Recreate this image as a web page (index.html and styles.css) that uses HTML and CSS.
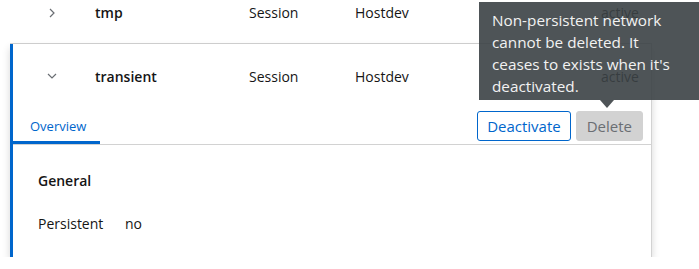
FILE: index.html
```html
<!DOCTYPE html>
<html>
<head>
  <meta name="viewport" content="width=device-width,initial-scale=1.0">
  <title>Networks</title>
  <link rel="stylesheet" href="styles.css">
</head>
<body>
  <div class="networks">
    <div class="row">
      <span class="toggle">
        <svg width="10" height="10" viewBox="0 0 10 10"><polyline points="3,1 7,5 3,9" /></svg>
      </span>
      <span class="name">tmp</span>
      <span>Session</span>
      <span>Hostdev</span>
      <span>active</span>
    </div>

    <div class="expanded">
      <div class="row">
        <span class="toggle">
          <svg width="10" height="10" viewBox="0 0 10 10"><polyline points="1,3 5,7 9,3" /></svg>
        </span>
        <span class="name">transient</span>
        <span>Session</span>
        <span>Hostdev</span>
        <span>active</span>
      </div>

      <div class="detail">
        <div class="tabbar">
          <a class="tab current">Overview</a>
          <div class="actions">
            <button type="button" class="btn secondary">Deactivate</button>
            <button type="button" class="btn disabled">Delete</button>
          </div>
        </div>
        <div class="panel">
          <h3>General</h3>
          <dl>
            <dt>Persistent</dt>
            <dd>no</dd>
          </dl>
        </div>
      </div>
    </div>
  </div>

  <div class="tooltip">
    Non-persistent network cannot be deleted. It ceases to exists when it's deactivated.
  </div>
</body>
</html>
```

FILE: styles.css
```css
body {
  margin: 0;
  font-family: "Open Sans", sans-serif;
  font-size: 14px;
  color: #151515;
  background: #fff;
}

.networks {
  margin: -18px 0 0 10px;
  width: 642px;
}

.row {
  display: grid;
  grid-template-columns: 85px 154px 106px 246px 1fr;
  align-items: center;
  height: 61px;
  border-bottom: 1px solid #d2d2d2;
}

.expanded {
  box-shadow: inset 3px 0 0 #06c, 0 4px 8px rgba(3, 3, 3, 0.16);
  border-right: 1px solid #d2d2d2;
}

.expanded .row {
  height: 64px;
  border-bottom: none;
}

.toggle {
  display: flex;
  padding-left: 37px;
}

.toggle svg polyline {
  fill: none;
  stroke: #6a6e73;
  stroke-width: 1.2;
}

.name {
  font-weight: 600;
}

.tabbar {
  display: flex;
  justify-content: space-between;
  align-items: center;
  height: 36px;
  margin-left: 3px;
  padding-right: 8px;
  border-bottom: 1px solid #d2d2d2;
}

.tab {
  display: flex;
  align-items: center;
  height: 36px;
  padding: 0 14px 0 17px;
  font-size: 13px;
  color: #06c;
  box-sizing: border-box;
}

.tab.current {
  box-shadow: inset 0 -3px 0 #06c;
}

.actions {
  display: flex;
  gap: 5px;
}

.btn {
  height: 30px;
  padding: 0 9px;
  border-radius: 3px;
  font-family: "Open Sans", sans-serif;
  font-size: 15px;
  background: #fff;
  border: 1px solid transparent;
}

.btn.secondary {
  color: #06c;
  border-color: #06c;
}

.btn.disabled {
  color: #6a6e73;
  background: #d2d2d2;
  border-color: #d2d2d2;
  padding: 0 10px;
}

.panel {
  padding: 26px 25px 23px 28px;
}

.panel h3 {
  margin: 0;
  font-size: 14px;
  font-weight: 600;
  line-height: 20px;
}

.panel dl {
  display: flex;
  margin: 23px 0 0;
  line-height: 20px;
}

.panel dt {
  width: 87px;
}

.panel dd {
  margin: 0;
}

.tooltip {
  position: absolute;
  left: 479px;
  top: 2px;
  width: 220px;
  box-sizing: border-box;
  padding: 7px 13px 3px;
  font-size: 15.3px;
  line-height: 22px;
  color: #f2f2f2;
  background: rgba(59, 65, 69, 0.9);
}

.tooltip::after {
  content: "";
  position: absolute;
  left: 121px;
  top: 100%;
  border-top: 8px solid rgba(59, 65, 69, 0.9);
  border-left: 7px solid transparent;
  border-right: 7px solid transparent;
}
```
